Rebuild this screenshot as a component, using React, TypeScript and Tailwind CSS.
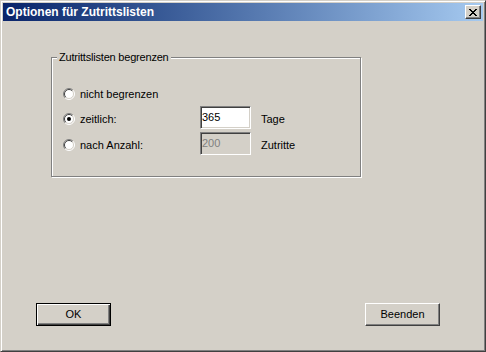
import React from 'react';

const font = { fontFamily: '"Liberation Sans", Arial, sans-serif' };

function CloseGlyph() {
  // classic 8x7 pixel cross
  const px = [
    [0, 0], [1, 0], [6, 0], [7, 0],
    [1, 1], [2, 1], [5, 1], [6, 1],
    [2, 2], [3, 2], [4, 2], [5, 2],
    [3, 3], [4, 3],
    [2, 4], [3, 4], [4, 4], [5, 4],
    [1, 5], [2, 5], [5, 5], [6, 5],
    [0, 6], [1, 6], [6, 6], [7, 6],
  ];
  return (
    <svg width="8" height="7" viewBox="0 0 8 7" shapeRendering="crispEdges">
      {px.map(([x, y]) => (
        <rect key={`${x}-${y}`} x={x} y={y} width="1" height="1" fill="#000" />
      ))}
    </svg>
  );
}

function Radio({ checked }: { checked?: boolean }) {
  return (
    <svg width="12" height="12" viewBox="0 0 12 12" className="shrink-0">
      <circle cx="6" cy="6" r="5" fill="#fff" />
      <path d="M2.1 9.9 A5.5 5.5 0 0 1 9.9 2.1" fill="none" stroke="#808080" strokeWidth="1" />
      <path d="M9.9 2.1 A5.5 5.5 0 0 1 2.1 9.9" fill="none" stroke="#fff" strokeWidth="1" />
      <path d="M2.8 9.2 A4.5 4.5 0 0 1 9.2 2.8" fill="none" stroke="#404040" strokeWidth="1" />
      <path d="M9.2 2.8 A4.5 4.5 0 0 1 2.8 9.2" fill="none" stroke="#d4d0c8" strokeWidth="1" />
      {checked && <circle cx="6" cy="6" r="2" fill="#000" />}
    </svg>
  );
}

function Edit({ value, disabled }: { value: string; disabled?: boolean }) {
  return (
    <div
      className={`w-[51px] h-[23px] border border-t-[#808080] border-l-[#808080] border-r-white border-b-white shadow-[inset_1px_1px_0_#404040,inset_-1px_-1px_0_#d4d0c8] pl-[1px] pt-[4px] text-[11px] leading-[13px] ${
        disabled ? 'bg-[#d4d0c8] text-[#808080]' : 'bg-white text-black'
      }`}
    >
      {value}
    </div>
  );
}

export default function App() {
  const rows = [
    { label: 'nicht begrenzen', checked: false },
    { label: 'zeitlich:', checked: true, value: '365', unit: 'Tage' },
    { label: 'nach Anzahl:', checked: false, value: '200', unit: 'Zutritte', disabled: true },
  ];

  return (
    <div
      style={font}
      className="w-[486px] h-[352px] bg-[#d4d0c8] border border-t-[#d4d0c8] border-l-[#d4d0c8] border-r-[#404040] border-b-[#404040] shadow-[inset_1px_1px_0_#fff,inset_-1px_-1px_0_#808080] p-[2px] flex flex-col text-black text-[11px]"
    >
      {/* Title bar */}
      <div className="h-[18px] shrink-0 flex items-center justify-between pl-[3px] pr-[2px] bg-gradient-to-r from-[#0a246a] to-[#a6caf0]">
        <span className="text-white font-bold text-[12px] leading-[14px]">Optionen für Zutrittslisten</span>
        <div className="w-[16px] h-[14px] flex items-center justify-center bg-[#d4d0c8] border border-t-white border-l-white border-r-[#404040] border-b-[#404040] shadow-[inset_-1px_-1px_0_#808080]">
          <CloseGlyph />
        </div>
      </div>

      {/* Group box */}
      <div className="relative ml-[48px] mt-[36px] w-[310px] h-[120px] border border-[#808080] shadow-[1px_1px_0_#fff,inset_1px_1px_0_#fff]">
        <span className="absolute -top-[7px] left-[5px] px-[2px] bg-[#d4d0c8] leading-[13px] tracking-[-0.2px]">
          Zutrittslisten begrenzen
        </span>
        <div className="pl-[11px] pt-[24px] flex flex-col">
          {rows.map((r, i) => (
            <div key={r.label} className={`flex items-center ${i === 0 ? 'h-[24px]' : 'h-[26px]'}`}>
              <div className="w-[137px] flex items-center gap-[5px]">
                <Radio checked={r.checked} />
                <span className="leading-[13px]">{r.label}</span>
              </div>
              {r.value && (
                <>
                  <div className="self-start">
                    <Edit value={r.value} disabled={r.disabled} />
                  </div>
                  <span className="ml-[10px] leading-[13px]">{r.unit}</span>
                </>
              )}
            </div>
          ))}
        </div>
      </div>

      {/* Buttons */}
      <div className="mt-auto mb-[23px] flex justify-between pl-[33px] pr-[43px]">
        <button className="w-[75px] h-[23px] bg-[#d4d0c8] border border-black shadow-[inset_1px_1px_0_#fff,inset_-1px_-1px_0_#404040,inset_-2px_-2px_0_#808080] text-[11px] leading-[13px]">
          OK
        </button>
        <button className="w-[75px] h-[23px] bg-[#d4d0c8] border border-t-white border-l-white border-r-[#404040] border-b-[#404040] shadow-[inset_-1px_-1px_0_#808080] text-[11px] leading-[13px]">
          Beenden
        </button>
      </div>
    </div>
  );
}
